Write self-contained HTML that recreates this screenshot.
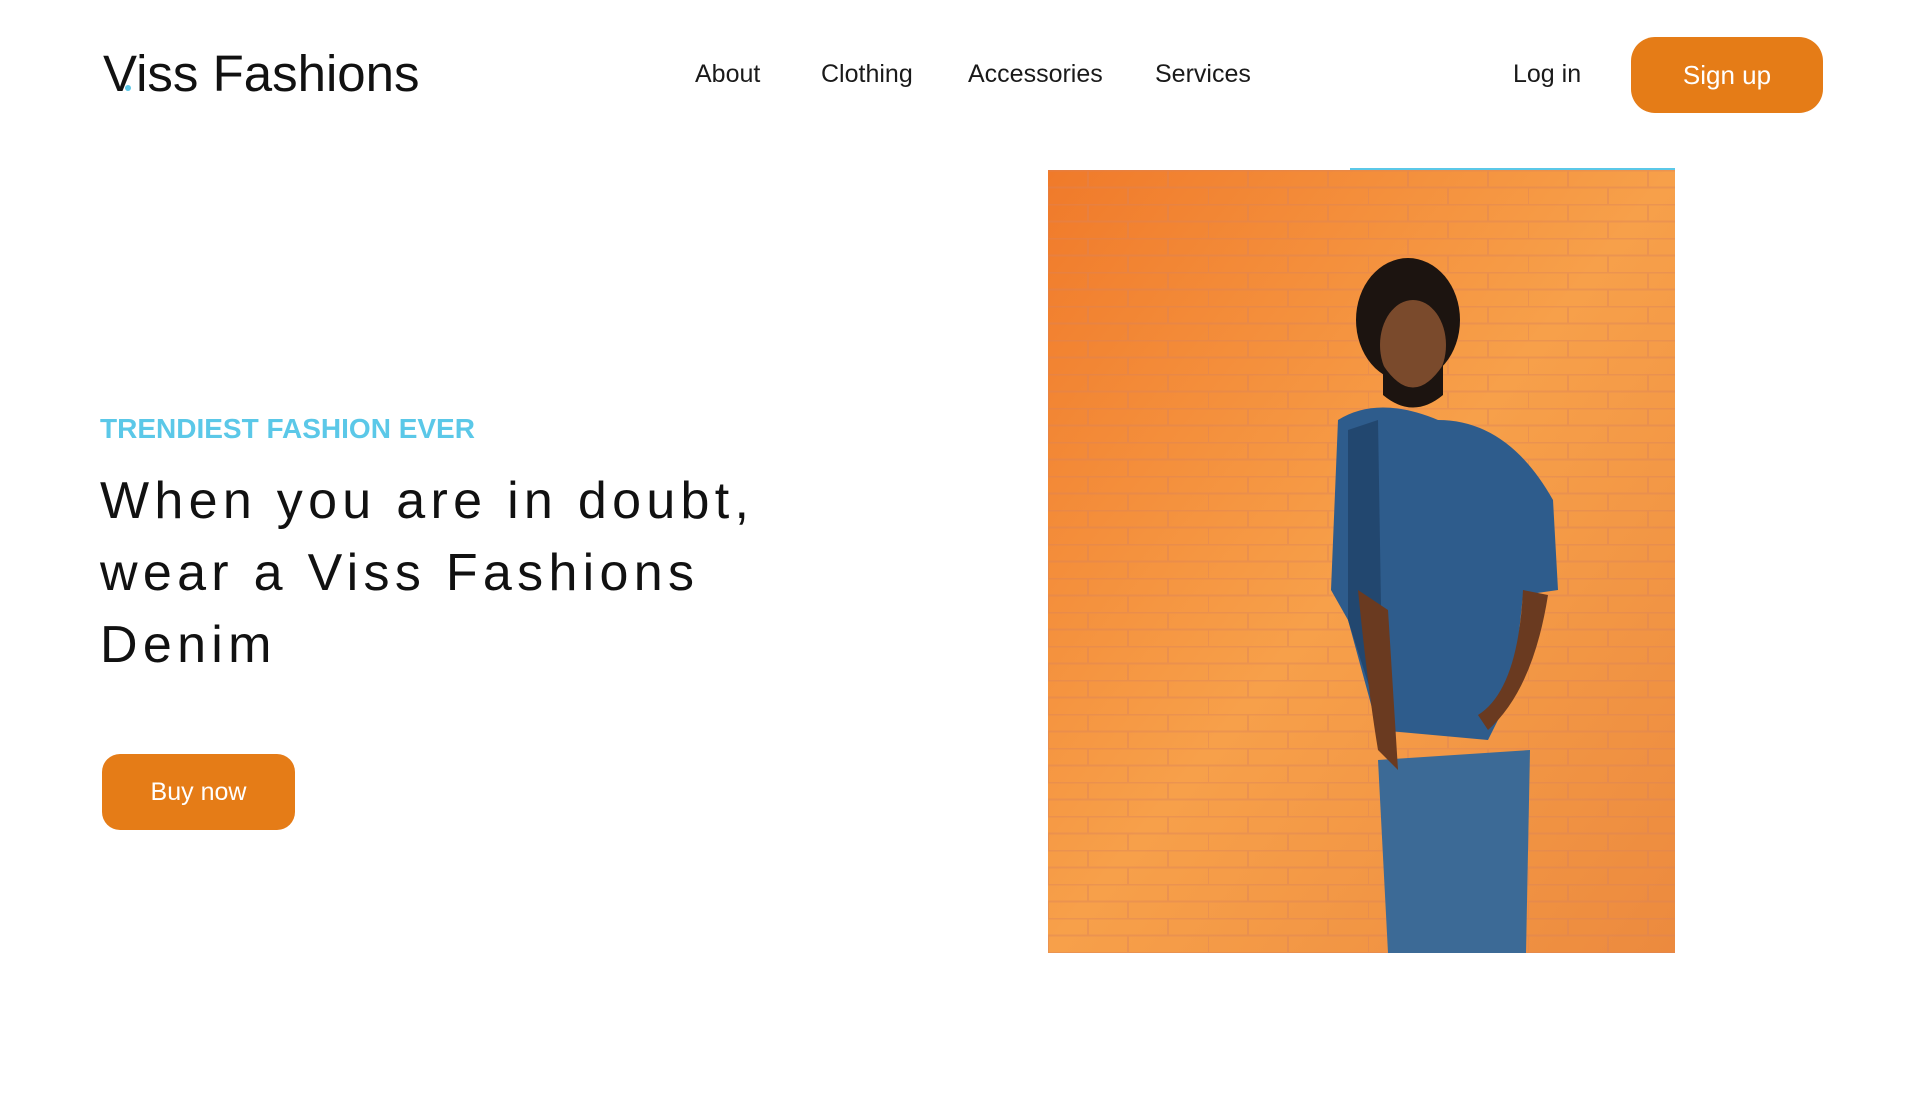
<!DOCTYPE html>
<html><head><meta charset="utf-8"><style>
*{margin:0;padding:0;box-sizing:border-box}
body{width:1920px;height:1097px;background:#fff;font-family:"Liberation Sans",sans-serif;position:relative;overflow:hidden;color:#111}
.a{position:absolute;white-space:nowrap}
.logo{left:103px;top:44px;font-size:51px}
.nav{top:60px;font-size:25px;color:#1a1a1a}
.btn{background:#e57c17;color:#fff;border-radius:24px;text-align:center}
</style></head><body>
<div class="a logo">Viss Fashions</div>
<div class="a" style="left:125px;top:85px;width:6px;height:6px;background:#5bc8e8;border-radius:50%"></div>
<div class="a nav" style="left:695px">About</div>
<div class="a nav" style="left:821px">Clothing</div>
<div class="a nav" style="left:968px">Accessories</div>
<div class="a nav" style="left:1155px">Services</div>
<div class="a nav" style="left:1513px">Log in</div>
<div class="a btn" style="left:1631px;top:37px;width:192px;height:76px;line-height:76px;font-size:26px">Sign up</div>
<div class="a" style="left:100px;top:413px;font-size:28px;font-weight:bold;color:#5bc8e8">TRENDIEST FASHION EVER</div>
<div class="a" style="left:100px;top:465px;font-size:52px;line-height:72px;letter-spacing:5.3px;color:#111">When you are in doubt,<br>wear a Viss Fashions<br>Denim</div>
<div class="a btn" style="left:102px;top:754px;width:193px;height:76px;line-height:76px;font-size:25px;border-radius:18px">Buy now</div>
<div class="a" style="left:1350px;top:168px;width:325px;height:2px;background:#5bc8e8"></div>
<svg class="a" style="left:1048px;top:170px" width="627" height="783" viewBox="0 0 627 783">
<defs>
<linearGradient id="w" x1="0" y1="0" x2="1" y2="1"><stop offset="0" stop-color="#f07a2a"/><stop offset=".5" stop-color="#f7a04a"/><stop offset="1" stop-color="#ec8a3e"/></linearGradient>
<pattern id="b" width="160" height="34" patternUnits="userSpaceOnUse"><path d="M0 0.5H160M0 17.5H160M40 0V17M120 0V17M0 17V34M80 17V34" stroke="#d9815a" stroke-width="2" opacity=".4"/></pattern>
</defs>
<rect width="627" height="783" fill="url(#w)"/>
<rect width="627" height="783" fill="url(#b)"/>
<path d="M330 590 L482 580 L478 783 L340 783 Z" fill="#3c6a96"/>
<path d="M290 250 Q330 225 390 250 Q460 250 505 330 L510 420 L475 425 L465 520 L440 570 L330 560 L300 450 L283 420 Z" fill="#2e5c8c"/>
<path d="M300 260 L330 250 L335 560 L300 450Z" fill="#22476f"/>
<path d="M310 420 Q320 520 330 580 L350 600 L340 440Z" fill="#6a3a20"/>
<path d="M475 420 Q470 520 430 545 L440 560 Q485 520 500 425Z" fill="#6a3a20"/>
<ellipse cx="360" cy="150" rx="52" ry="62" fill="#1c1410"/>
<ellipse cx="365" cy="175" rx="33" ry="45" fill="#7a4a2c"/>
<path d="M335 195 Q365 240 395 195 L395 225 Q365 250 335 225Z" fill="#1c1410"/>
</svg>
</body></html>
